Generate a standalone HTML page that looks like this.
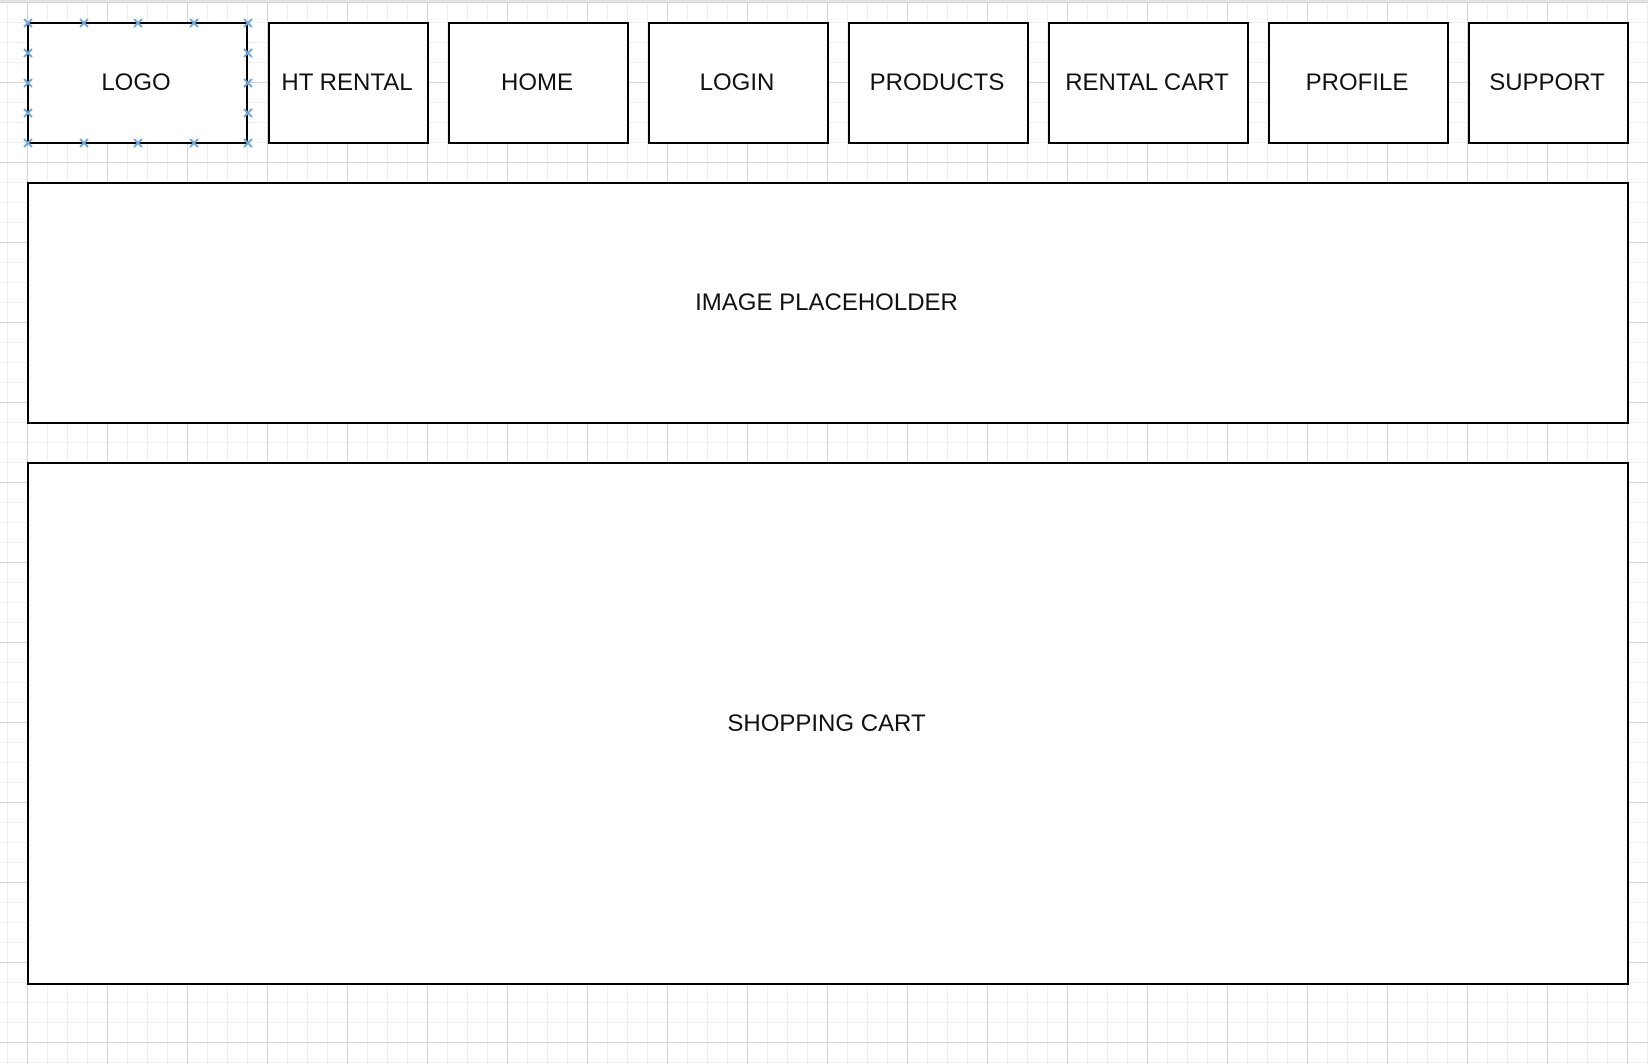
<!DOCTYPE html>
<html><head><meta charset="utf-8"><style>
html,body{margin:0;padding:0}
body{width:1648px;height:1064px;position:relative;overflow:hidden;background-color:#fff;
background-image:
linear-gradient(to right,#d4d4d4 1px,transparent 1px),
linear-gradient(to bottom,#d4d4d4 1px,transparent 1px),
linear-gradient(to right,#efefef 1px,transparent 1px),
linear-gradient(to bottom,#efefef 1px,transparent 1px);
background-size:80px 80px,80px 80px,20px 20px,20px 20px;
background-position:27px 2px,27px 2px,7px 2px,7px 2px;
font-family:"Liberation Sans",Arial,sans-serif;}
.top{position:absolute;left:0;top:0;width:1648px;height:2px;background:#e4e4e4}
.b{position:absolute;box-sizing:border-box;border:2px solid #000;background:#fff;display:flex;align-items:center;justify-content:center;font-size:24px;color:#111;padding-right:3px}
svg{position:absolute;left:0;top:0}
</style></head><body>
<div class="top"></div>
<div class="b" style="left:27px;top:22px;width:221px;height:122px">LOGO</div>
<div class="b" style="left:268px;top:22px;width:161px;height:122px">HT RENTAL</div>
<div class="b" style="left:448px;top:22px;width:181px;height:122px">HOME</div>
<div class="b" style="left:648px;top:22px;width:181px;height:122px">LOGIN</div>
<div class="b" style="left:848px;top:22px;width:181px;height:122px">PRODUCTS</div>
<div class="b" style="left:1048px;top:22px;width:201px;height:122px">RENTAL CART</div>
<div class="b" style="left:1268px;top:22px;width:181px;height:122px">PROFILE</div>
<div class="b" style="left:1468px;top:22px;width:161px;height:122px">SUPPORT</div>
<div class="b" style="left:27px;top:182px;width:1602px;height:242px">IMAGE PLACEHOLDER</div>
<div class="b" style="left:27px;top:462px;width:1602px;height:523px">SHOPPING CART</div>
<svg width="300" height="170" stroke="#6fa8dc" stroke-width="2">
<defs><path id="c" d="M-4,-4L4,4M4,-4L-4,4"/></defs>
<use href="#c" x="28" y="23"/><use href="#c" x="84" y="23"/><use href="#c" x="138" y="23"/><use href="#c" x="194" y="23"/><use href="#c" x="248" y="23"/>
<use href="#c" x="28" y="143"/><use href="#c" x="84" y="143"/><use href="#c" x="138" y="143"/><use href="#c" x="194" y="143"/><use href="#c" x="248" y="143"/>
<use href="#c" x="28" y="53"/><use href="#c" x="28" y="83"/><use href="#c" x="28" y="113"/>
<use href="#c" x="248" y="53"/><use href="#c" x="248" y="83"/><use href="#c" x="248" y="113"/>
</svg>
</body></html>
